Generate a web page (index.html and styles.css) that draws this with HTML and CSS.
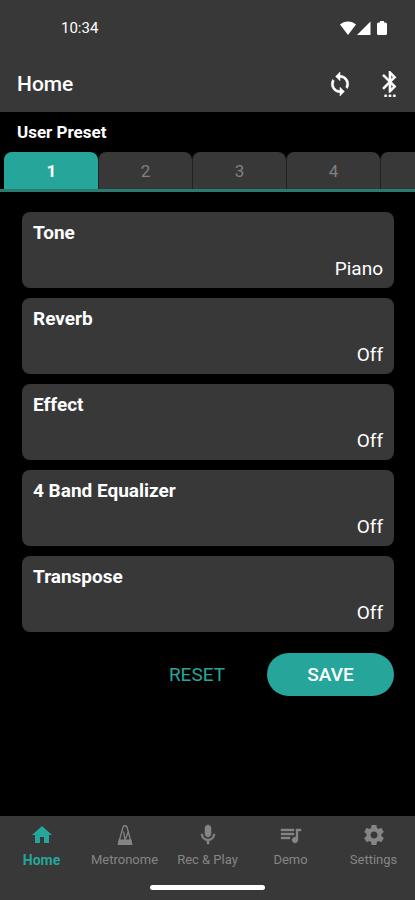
FILE: index.html
```html
<!DOCTYPE html>
<html lang="en">
<head>
    <meta charset="UTF-8">
    <meta name="viewport" content="width=device-width, initial-scale=1.0">
    <title>Home</title>
    <link rel="stylesheet" href="styles.css">
</head>
<body>
    <header>
        <div class="status-bar">
            <span>10:34</span>
            <div class="status-icons">
                <svg width="18" height="16" viewBox="0 0 18 16"><path d="M1 4.500C5.500.5 12.500.5 17 4.500L9 15z"/></svg>
                <svg width="14" height="16" viewBox="0 0 14 16"><path d="M0 15L13.500 1.500V15z"/></svg>
                <svg class="battery" width="10" height="16" viewBox="0 0 10 16"><path d="M3 1h4v1.500h1.500Q10 2.500 10 4v9.500Q10 15 8.500 15h-7Q0 15 0 13.500V4Q0 2.500 1.500 2.500H3z"/></svg>
            </div>
        </div>
        <div class="app-bar">
            <h1>Home</h1>
            <button class="icon-button" aria-label="Sync">
                <svg width="26" height="26" viewBox="0 0 24 24"><path stroke="currentColor" stroke-width=".5" d="M12 4V1L8 5l4 4V6c3.310 0 6 2.690 6 6 0 1.010-.25 1.970-.7 2.800l1.460 1.460C19.540 15.030 20 13.570 20 12c0-4.420-3.580-8-8-8zm0 14c-3.310 0-6-2.690-6-6 0-1.010.25-1.970.7-2.800L5.240 7.740C4.460 8.970 4 10.430 4 12c0 4.420 3.580 8 8 8v3l4-4-4-4v3z"/></svg>
            </button>
            <button class="icon-button" aria-label="Bluetooth">
                <svg width="26" height="26" viewBox="0 0 24 24"><path stroke="currentColor" stroke-width=".4" d="M11 24h2v-2h-2v2zm-4 0h2v-2H7v2zm8 0h2v-2h-2v2zm2.710-18.290L12 0h-1v7.590L6.410 3 5 4.410 10.590 10 5 15.590 6.410 17 11 12.410V20h1l5.710-5.710-4.300-4.290 4.300-4.290zM13 3.830l1.880 1.880L13 7.590V3.830zm1.880 10.460L13 16.170v-3.760l1.880 1.880z"/></svg>
            </button>
        </div>
    </header>

    <main>
        <h2>User Preset</h2>
        <div class="tabs">
            <button class="tab active">1</button>
            <button class="tab">2</button>
            <button class="tab">3</button>
            <button class="tab">4</button>
            <button class="tab" aria-label="5"></button>
        </div>

        <div class="cards">
            <button class="card"><strong>Tone</strong><span>Piano</span></button>
            <button class="card"><strong>Reverb</strong><span>Off</span></button>
            <button class="card"><strong>Effect</strong><span>Off</span></button>
            <button class="card"><strong>4 Band Equalizer</strong><span>Off</span></button>
            <button class="card"><strong>Transpose</strong><span>Off</span></button>
        </div>

        <div class="actions">
            <button class="reset">RESET</button>
            <button class="save">SAVE</button>
        </div>
    </main>

    <footer>
        <nav>
            <a href="#home" class="active">
                <svg width="24" height="24" viewBox="0 0 24 24"><path d="M10 20v-6h4v6h5v-8h3L12 3 2 12h3v8z"/></svg>
                <span>Home</span>
            </a>
            <a href="#metronome">
                <svg width="24" height="24" viewBox="0 0 24 24"><path d="M6.500 17L10 4Q12 1.500 14 4L17.500 17M12 17L10.500 8.500M12.500 16L15.500 8" fill="none" stroke="currentColor" stroke-width="1.300"/><path d="M5.500 16.500h13L19.500 22h-15z"/></svg>
                <span>Metronome</span>
            </a>
            <a href="#rec">
                <svg width="24" height="24" viewBox="0 0 24 24"><path stroke="currentColor" stroke-width=".5" d="M12 14c1.660 0 2.990-1.340 2.990-3L15 5c0-1.660-1.340-3-3-3S9 3.340 9 5v6c0 1.660 1.340 3 3 3zm5.300-3c0 3-2.540 5.100-5.300 5.100S6.700 14 6.700 11H5c0 3.410 2.720 6.230 6 6.720V21h2v-3.280c3.280-.48 6-3.300 6-6.720h-1.700z"/></svg>
                <span>Rec &amp; Play</span>
            </a>
            <a href="#demo">
                <svg width="24" height="24" viewBox="0 0 24 24"><path stroke="currentColor" stroke-width=".4" d="M15 6H2v2h13V6zm0 4H2v2h13v-2zM2 16h9v-2H2v2zM17 6v8.180c-.31-.11-.65-.18-1-.18-1.660 0-3 1.340-3 3s1.340 3 3 3 3-1.340 3-3V8h3V6h-5z"/></svg>
                <span>Demo</span>
            </a>
            <a href="#settings">
                <svg width="24" height="24" viewBox="0 0 24 24"><path d="M19.430 12.980c.04-.32.07-.64.07-.98s-.03-.66-.07-.98l2.110-1.650c.19-.15.24-.42.12-.64l-2-3.460c-.12-.22-.39-.3-.61-.22l-2.490 1c-.52-.4-1.080-.73-1.690-.98l-.38-2.650C14.460 2.180 14.250 2 14 2h-4c-.25 0-.46.18-.49.42l-.38 2.650c-.61.25-1.170.59-1.690.98l-2.490-1c-.23-.09-.49 0-.61.22l-2 3.460c-.13.22-.07.49.12.64l2.110 1.650c-.04.32-.07.65-.07.98s.03.66.07.98l-2.110 1.650c-.19.15-.24.42-.12.64l2 3.460c.12.22.39.3.61.22l2.490-1c.52.4 1.080.73 1.690.98l.38 2.650c.03.24.24.42.49.42h4c.25 0 .46-.18.49-.42l.38-2.650c.61-.25 1.170-.59 1.690-.98l2.490 1c.23.09.49 0 .61-.22l2-3.460c.12-.22.07-.49-.12-.64l-2.110-1.650zM12 15.500c-1.930 0-3.500-1.570-3.500-3.500s1.570-3.500 3.500-3.500 3.500 1.570 3.500 3.500-1.570 3.500-3.500 3.500z"/></svg>
                <span>Settings</span>
            </a>
        </nav>
        <div class="home-indicator"></div>
    </footer>
</body>
</html>
```

FILE: styles.css
```css
* {
    box-sizing: border-box;
}

body {
    margin: 0;
    min-height: 100vh;
    display: flex;
    flex-direction: column;
    background-color: #000;
    color: #fff;
    font-family: Roboto, sans-serif;
}

button {
    margin: 0;
    padding: 0;
    border: none;
    background: none;
    color: inherit;
    font-family: inherit;
    cursor: pointer;
}

svg {
    display: block;
    fill: currentColor;
}

header {
    background-color: #383838;
}

.status-bar {
    height: 56px;
    padding: 0 28px 0 61px;
    display: flex;
    justify-content: space-between;
    align-items: center;
    font-size: 15px;
}

.status-icons {
    display: flex;
}

.status-icons .battery {
    margin-left: 6px;
}

.app-bar {
    height: 56px;
    padding: 0 12px 0 17px;
    display: flex;
    align-items: center;
    gap: 24px;
}

.icon-button {
    height: 28px;
}

.app-bar h1 {
    margin: 0;
    flex: 1;
    font-size: 21px;
    font-weight: 500;
}

main {
    flex: 1;
}

main h2 {
    margin: 0;
    padding: 0 17px;
    font-size: 17px;
    font-weight: 700;
    line-height: 40px;
}

.tabs {
    display: flex;
    padding-left: 4px;
    overflow: hidden;
    border-bottom: 3px solid #2a7a70;
}

.tab {
    flex: 0 0 94px;
    height: 37px;
    border-left: 1px solid #222;
    border-radius: 8px 8px 0 0;
    background-color: #383838;
    color: #808080;
    font-size: 17px;
    line-height: 39px;
}

.tab.active {
    background-color: #26a69a;
    border-color: #26a69a;
    color: #fff;
    font-weight: 700;
}

.cards {
    padding: 20px 21px 0 22px;
    display: flex;
    flex-direction: column;
    gap: 10px;
}

.card {
    height: 76px;
    padding: 8px 11px 6px;
    display: flex;
    flex-direction: column;
    justify-content: space-between;
    border-radius: 8px;
    background-color: #383838;
    font-size: 19px;
    line-height: 26px;
}

.card strong {
    align-self: flex-start;
    font-weight: 700;
}

.card span {
    align-self: flex-end;
}

.actions {
    padding: 21px 21px 21px 22px;
    display: flex;
    justify-content: flex-end;
    gap: 12px;
}

.actions button {
    height: 43px;
    font-size: 19px;
}

.reset {
    padding: 0 30px;
    color: #26a69a;
}

.actions .save {
    width: 127px;
    border-radius: 22px;
    background-color: #26a69a;
    font-weight: 500;
}

footer {
    background-color: #383838;
    padding-bottom: 10px;
}

nav {
    display: flex;
    height: 69px;
    padding-top: 7px;
}

nav a {
    flex: 1 1 0;
    display: flex;
    flex-direction: column;
    align-items: center;
    color: #858585;
    font-size: 13px;
    line-height: 26px;
    text-decoration: none;
    white-space: nowrap;
}

nav a.active {
    color: #26a69a;
    font-size: 14px;
    font-weight: 700;
}

.home-indicator {
    width: 115px;
    height: 5px;
    margin: 0 auto;
    border-radius: 3px;
    background-color: #fff;
}
```
